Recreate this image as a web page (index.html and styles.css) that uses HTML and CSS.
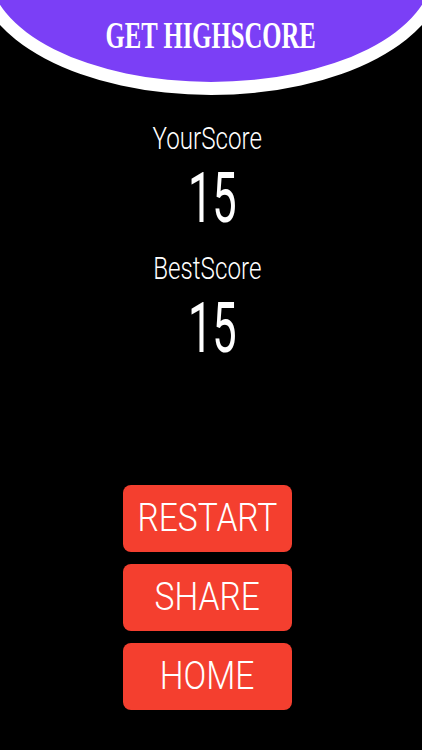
FILE: index.html
```html
<!DOCTYPE html>
<html>
<head>
<meta charset="utf-8">
<link rel="stylesheet" href="styles.css">
</head>
<body>
<div class="banner-wrap">
  <header class="banner"><span class="banner-title">GET HIGHSCORE</span></header>
</div>
<main class="scores">
  <div class="label"><span class="squeeze-label">YourScore</span></div>
  <div class="number"><span class="squeeze-num">15</span></div>
  <div class="label label-best"><span class="squeeze-label">BestScore</span></div>
  <div class="number"><span class="squeeze-num">15</span></div>
</main>
<nav class="buttons">
  <div class="btn"><span class="btn-text">RESTART</span></div>
  <div class="btn"><span class="btn-text">SHARE</span></div>
  <div class="btn"><span class="btn-text">HOME</span></div>
</nav>
</body>
</html>
```
FILE: styles.css
```css
html, body {
  margin: 0;
  padding: 0;
  background: #000;
  overflow: hidden;
  width: 422px;
  height: 750px;
}
body {
  display: flex;
  flex-direction: column;
  align-items: center;
  color: #fff;
  font-family: Roboto, "Liberation Sans", sans-serif;
}
.banner-wrap {
  width: 422px;
  height: 95px;
  overflow: hidden;
  display: flex;
  justify-content: center;
  flex: none;
}
.banner {
  box-sizing: border-box;
  flex: none;
  width: 470px;
  height: 250px;
  margin-top: -155px;
  border: 13px solid #fff;
  border-radius: 50%;
  background: #7b3ff6;
  display: flex;
  justify-content: center;
  align-items: flex-start;
  padding-top: 158px;
}
.banner-title {
  display: inline-block;
  font-family: "Liberation Serif", serif;
  font-weight: bold;
  font-size: 38px;
  line-height: 1;
  white-space: nowrap;
  transform: scaleX(0.65);
}
.scores {
  display: flex;
  flex-direction: column;
  align-items: center;
  margin-top: 28px;
}
.label {
  font-size: 31px;
  line-height: 31px;
  height: 31px;
  font-weight: 300;
  white-space: nowrap;
  margin-right: 8px;
}
.label-best {
  margin-top: 20px;
}
.squeeze-label {
  display: inline-block;
  transform: scaleX(0.78);
}
.number {
  margin-top: 9px;
  font-size: 70px;
  line-height: 70px;
  height: 70px;
  font-weight: 400;
  margin-left: 2px;
}
.squeeze-num {
  display: inline-block;
  transform: scaleX(0.62);
}
.buttons {
  display: flex;
  flex-direction: column;
  gap: 12px;
  margin-top: 122px;
  margin-right: 8px;
}
.btn {
  width: 169px;
  height: 67px;
  border-radius: 8px;
  background: #f43f2f;
  display: flex;
  align-items: center;
  justify-content: center;
}
.btn-text {
  display: inline-block;
  font-size: 39px;
  font-weight: 300;
  line-height: 1;
  transform: scaleX(0.86);
}
```
